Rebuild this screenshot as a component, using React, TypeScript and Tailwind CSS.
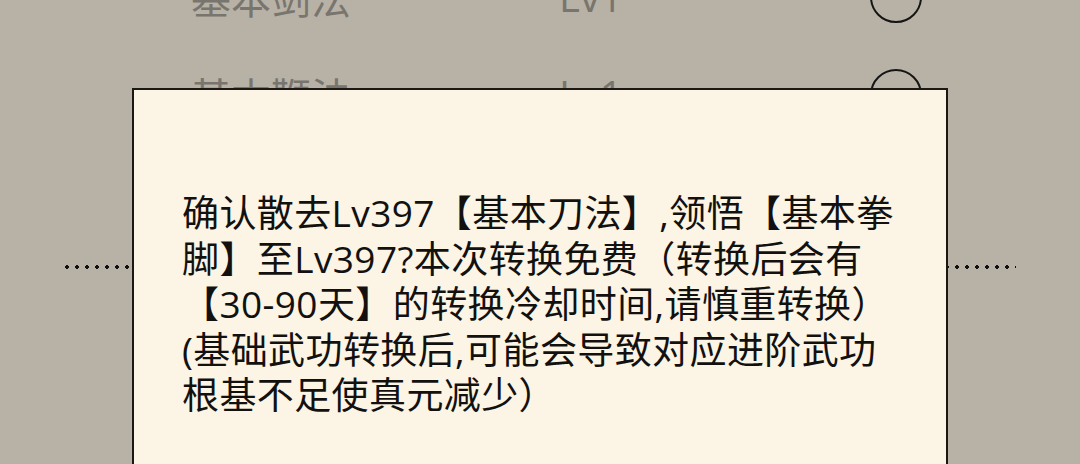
import React from "react";

const cjk = { fontFamily: '"Noto Sans CJK SC", "Noto Sans", sans-serif' };
const body = { fontFamily: '"Open Sans", "Noto Sans CJK SC", sans-serif' };

type Skill = { name: string; level: string };

const skills: Skill[] = [
  { name: "基本剑法", level: "Lv1" },
  { name: "基本鞭法", level: "Lv1" },
];

function SkillRow({ skill }: { skill: Skill }) {
  return (
    <div className="flex h-[98px] items-center pl-[191px] pr-[158px] text-[40px] text-[#78756f]">
      <div className="w-[368px] whitespace-nowrap">{skill.name}</div>
      <div className="flex-1 whitespace-nowrap" style={body}>
        {skill.level}
      </div>
      <div className="h-[52px] w-[52px] rounded-full border-[2.5px] border-[#151515]" />
    </div>
  );
}

export default function App() {
  return (
    <div
      className="relative h-[464px] w-[1080px] overflow-hidden bg-[#b8b1a5]"
      style={cjk}
    >
      {/* skill list underneath the dialog */}
      <div className="mt-[-52px] flex flex-col">
        {skills.map((s) => (
          <SkillRow key={s.name} skill={s} />
        ))}
        <div className="ml-[62px] mr-[64px] mt-[121px] h-[4px] bg-[radial-gradient(circle,#111_1.6px,transparent_2.1px)] bg-[length:10px_4px] bg-repeat-x" />
      </div>

      {/* confirmation dialog */}
      <div className="absolute left-[132px] top-[88px] h-[420px] w-[816px] border-2 border-[#1a1715] bg-[#fcf5e5] pl-[48px] pt-[100px]">
        <p
          className="whitespace-nowrap text-[37px] font-normal leading-[45.5px] tracking-[0.4px] text-[#121110]"
          style={body}
        >
          确认散去Lv397【基本刀法】,领悟【基本拳
          <br />
          脚】至Lv397?本次转换免费（转换后会有
          <br />
          【30-90天】的转换冷却时间,请慎重转换）
          <br />
          (基础武功转换后,可能会导致对应进阶武功
          <br />
          根基不足使真元减少）
        </p>
      </div>
    </div>
  );
}
